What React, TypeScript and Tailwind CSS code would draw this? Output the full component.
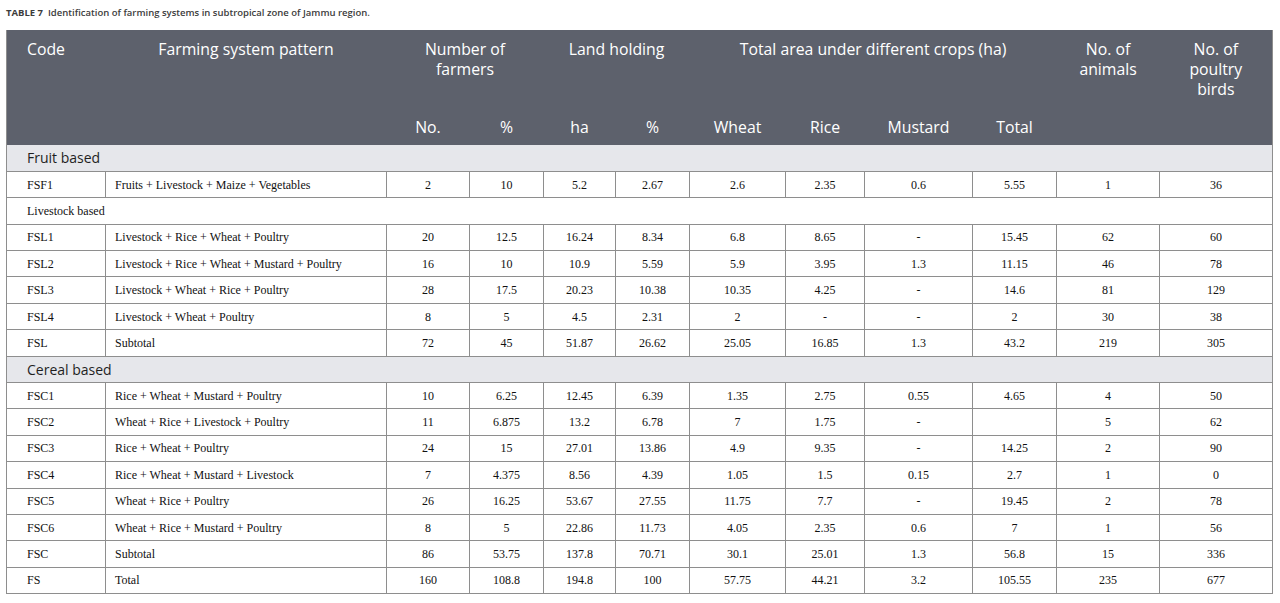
type Row = string[];

const fruitRows: Row[] = [
  ["FSF1", "Fruits + Livestock + Maize + Vegetables", "2", "10", "5.2", "2.67", "2.6", "2.35", "0.6", "5.55", "1", "36"],
];

const livestockRows: Row[] = [
  ["FSL1", "Livestock + Rice + Wheat + Poultry", "20", "12.5", "16.24", "8.34", "6.8", "8.65", "-", "15.45", "62", "60"],
  ["FSL2", "Livestock + Rice + Wheat + Mustard + Poultry", "16", "10", "10.9", "5.59", "5.9", "3.95", "1.3", "11.15", "46", "78"],
  ["FSL3", "Livestock + Wheat + Rice + Poultry", "28", "17.5", "20.23", "10.38", "10.35", "4.25", "-", "14.6", "81", "129"],
  ["FSL4", "Livestock + Wheat + Poultry", "8", "5", "4.5", "2.31", "2", "-", "-", "2", "30", "38"],
  ["FSL", "Subtotal", "72", "45", "51.87", "26.62", "25.05", "16.85", "1.3", "43.2", "219", "305"],
];

const cerealRows: Row[] = [
  ["FSC1", "Rice + Wheat + Mustard + Poultry", "10", "6.25", "12.45", "6.39", "1.35", "2.75", "0.55", "4.65", "4", "50"],
  ["FSC2", "Wheat + Rice + Livestock + Poultry", "11", "6.875", "13.2", "6.78", "7", "1.75", "-", "", "5", "62"],
  ["FSC3", "Rice + Wheat + Poultry", "24", "15", "27.01", "13.86", "4.9", "9.35", "-", "14.25", "2", "90"],
  ["FSC4", "Rice + Wheat + Mustard + Livestock", "7", "4.375", "8.56", "4.39", "1.05", "1.5", "0.15", "2.7", "1", "0"],
  ["FSC5", "Wheat + Rice + Poultry", "26", "16.25", "53.67", "27.55", "11.75", "7.7", "-", "19.45", "2", "78"],
  ["FSC6", "Wheat + Rice + Mustard + Poultry", "8", "5", "22.86", "11.73", "4.05", "2.35", "0.6", "7", "1", "56"],
  ["FSC", "Subtotal", "86", "53.75", "137.8", "70.71", "30.1", "25.01", "1.3", "56.8", "15", "336"],
  ["FS", "Total", "160", "108.8", "194.8", "100", "57.75", "44.21", "3.2", "105.55", "235", "677"],
];

function DataRow({ row }: { row: Row }) {
  return (
    <tr className="h-[26.4px] border-b border-[#8e8e8e]">
      {row.map((cell, i) => (
        <td
          key={i}
          className={
            i === 0
              ? "pl-[20px] border-r border-[#8e8e8e]"
              : i === 1
              ? "pl-[9px] border-r border-[#8e8e8e]"
              : "text-center border-r border-[#8e8e8e]"
          }
        >
          {cell}
        </td>
      ))}
    </tr>
  );
}

function SectionRow({ label }: { label: string }) {
  return (
    <tr className="h-[26.4px] border-b border-[#8e8e8e] bg-[#e6e7eb]">
      <td colSpan={12} className="pl-[20px] font-['Open_Sans',sans-serif] text-[14px] text-[#1f1f1f]">
        {label}
      </td>
    </tr>
  );
}

export default function App() {
  return (
    <div className="w-[1280px] h-[603px] bg-white px-[6px] pt-[6px] overflow-hidden">
      <div className="font-['Open_Sans',sans-serif] text-[9.5px] font-semibold text-[#3c3c3c] leading-[13px]">
        <span className="font-bold">TABLE 7</span>&nbsp; Identification of farming systems in subtropical zone of Jammu region.
      </div>

      <table className="mt-[11px] w-[1266px] table-fixed border-collapse border-x border-[#8e8e8e] font-['Liberation_Serif',serif] text-[12px] text-[#111111]">
        <colgroup>
          <col className="w-[99px]" />
          <col className="w-[281px]" />
          <col className="w-[83px]" />
          <col className="w-[74px]" />
          <col className="w-[72px]" />
          <col className="w-[74px]" />
          <col className="w-[96px]" />
          <col className="w-[79px]" />
          <col className="w-[108px]" />
          <col className="w-[84px]" />
          <col className="w-[103px]" />
          <col className="w-[113px]" />
        </colgroup>
        <thead className="bg-[#5d616c] text-white font-['Open_Sans',sans-serif] text-[15.8px] font-normal leading-[20px]">
          <tr className="h-[78px]">
            <th rowSpan={2} className="align-top pt-[9px] pl-[20px] text-left font-normal">Code</th>
            <th rowSpan={2} className="align-top pt-[9px] text-center font-normal">Farming system pattern</th>
            <th colSpan={2} className="align-top pt-[9px] text-center font-normal">
              Number of
              <br />
              farmers
            </th>
            <th colSpan={2} className="align-top pt-[9px] text-center font-normal">Land holding</th>
            <th colSpan={4} className="align-top pt-[9px] text-center font-normal">Total area under different crops (ha)</th>
            <th rowSpan={2} className="align-top pt-[9px] text-center font-normal">
              No. of
              <br />
              animals
            </th>
            <th rowSpan={2} className="align-top pt-[9px] text-center font-normal">
              No. of
              <br />
              poultry
              <br />
              birds
            </th>
          </tr>
          <tr className="h-[37px]">
            <th className="font-normal text-center">No.</th>
            <th className="font-normal text-center">%</th>
            <th className="font-normal text-center">ha</th>
            <th className="font-normal text-center">%</th>
            <th className="font-normal text-center">Wheat</th>
            <th className="font-normal text-center">Rice</th>
            <th className="font-normal text-center">Mustard</th>
            <th className="font-normal text-center">Total</th>
          </tr>
        </thead>
        <tbody>
          <SectionRow label="Fruit based" />
          {fruitRows.map((r) => (
            <DataRow key={r[0]} row={r} />
          ))}
          <tr className="h-[26.4px] border-b border-[#8e8e8e]">
            <td colSpan={12} className="pl-[20px]">Livestock based</td>
          </tr>
          {livestockRows.map((r) => (
            <DataRow key={r[0]} row={r} />
          ))}
          <SectionRow label="Cereal based" />
          {cerealRows.map((r) => (
            <DataRow key={r[0]} row={r} />
          ))}
        </tbody>
      </table>
    </div>
  );
}
